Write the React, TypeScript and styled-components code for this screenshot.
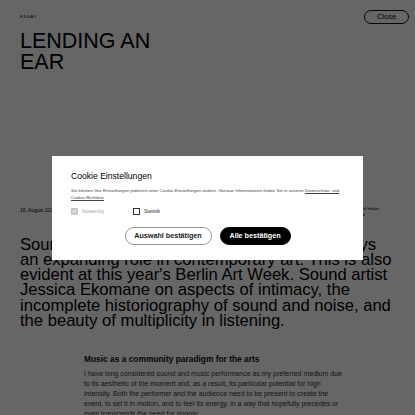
import React from "react";
import styled, { createGlobalStyle } from "styled-components";

const Global = createGlobalStyle`
  html, body { margin: 0; padding: 0; background: #fff; }
  body { font-family: "Liberation Sans", Arial, sans-serif; color: #000; overflow: hidden; }
  * { box-sizing: border-box; }
`;

const Page = styled.div`
  width: 415px;
  height: 415px;
  overflow: hidden;
  padding: 9px 6px 0 20px;
`;

const TopRow = styled.div`
  display: flex;
  justify-content: space-between;
  align-items: flex-start;
`;

const Kicker = styled.div`
  font-size: 4.4px;
  letter-spacing: 0.12em;
  margin-top: 5px;
`;

const CloseButton = styled.button`
  font-family: inherit;
  font-size: 7.5px;
  height: 14px;
  width: 45px;
  border: 1px solid #111;
  border-radius: 7px;
  background: transparent;
  color: #000;
  padding: 0;
  margin-top: 0.5px;
`;

const Headline = styled.h1`
  margin: 7px 0 0;
  font-size: 21.5px;
  line-height: 21px;
  font-weight: 400;
`;

const MetaRow = styled.div`
  display: grid;
  grid-template-columns: 1fr 52px;
  margin-top: 134px;
  font-size: 5px;
  line-height: 6px;
`;

const Credits = styled.div`
  font-size: 4.4px;
  line-height: 6px;
  margin-top: -1px;
  white-space: nowrap;
  margin-left: -10px;
`;

const Lead = styled.p`
  margin: 19px 0 0;
  font-size: 16.6px;
  line-height: 15.3px;
  white-space: nowrap;
`;

const Article = styled.div`
  margin: 26px 0 0 64px;
  width: 260px;
`;

const SubHead = styled.h2`
  margin: 0;
  font-size: 8.4px;
  font-weight: 700;
  line-height: 10px;
  color: #111;
`;

const Body = styled.p`
  margin: 5px 0 0;
  font-size: 7px;
  line-height: 10px;
  color: #333;
`;

const Overlay = styled.div`
  position: fixed;
  inset: 0;
  background: rgba(0, 0, 0, 0.6);
  display: flex;
  align-items: center;
  justify-content: center;
`;

const Modal = styled.div`
  width: 311px;
  height: 104px;
  background: #fff;
  padding: 15px 19px 0 19px;
  display: flex;
  flex-direction: column;
`;

const ModalTitle = styled.div`
  font-size: 8.6px;
  line-height: 11px;
  color: #000;
`;

const ModalText = styled.div`
  margin-top: 5px;
  font-size: 4.4px;
  line-height: 7px;
  color: #444;
  a { color: #444; text-decoration: underline; }
`;

const Options = styled.div`
  display: flex;
  align-items: center;
  margin-top: 7px;
`;

const Option = styled.label<{ $width: number; $muted?: boolean }>`
  display: flex;
  align-items: center;
  gap: 4px;
  width: ${(p) => p.$width}px;
  font-size: 4.6px;
  color: ${(p) => (p.$muted ? "#aaa" : "#333")};
`;

const Box = styled.span<{ $checked?: boolean }>`
  width: 7px;
  height: 7px;
  display: inline-flex;
  align-items: center;
  justify-content: center;
  border: 1px solid ${(p) => (p.$checked ? "#c8c8c8" : "#333")};
  background: ${(p) => (p.$checked ? "#c8c8c8" : "#fff")};
`;

const Buttons = styled.div`
  display: flex;
  justify-content: center;
  gap: 8px;
  margin-top: 12px;
`;

const PillButton = styled.button<{ $dark?: boolean }>`
  font-family: inherit;
  font-size: 7.2px;
  font-weight: 700;
  height: 18px;
  padding: 0;
  width: ${(p) => (p.$dark ? 71 : 87)}px;
  border-radius: 9px;
  border: 1px solid ${(p) => (p.$dark ? "#000" : "#999")};
  background: ${(p) => (p.$dark ? "#000" : "#fff")};
  color: ${(p) => (p.$dark ? "#fff" : "#222")};
`;

export default function App() {
  return (
    <>
      <Global />
      <Page>
        <TopRow>
          <Kicker>ESSAY</Kicker>
          <CloseButton>Close</CloseButton>
        </TopRow>
        <Headline>
          LENDING AN
          <br />
          EAR
        </Headline>
        <MetaRow>
          <div>16. August 2024</div>
          <Credits>
            Images of Halim
            <br />
            El-Sayed
          </Credits>
        </MetaRow>
        <Lead>
          Sound as a medium in its many forms now plays
          <br />
          an expanding role in contemporary art. This is also
          <br />
          evident at this year's Berlin Art Week. Sound artist
          <br />
          Jessica Ekomane on aspects of intimacy, the
          <br />
          incomplete historiography of sound and noise, and
          <br />
          the beauty of multiplicity in listening.
        </Lead>
        <Article>
          <SubHead>Music as a community paradigm for the arts</SubHead>
          <Body>
            I have long considered sound and music performance as my preferred medium due to its
            aesthetic of the moment and, as a result, its particular potential for high intensity.
            Both the performer and the audience need to be present to create the event, to set it
            in motion, and to feel its energy, in a way that hopefully precedes or even transcends
            the need for ‹logos›.
          </Body>
        </Article>
      </Page>
      <Overlay>
        <Modal>
          <ModalTitle>Cookie Einstellungen</ModalTitle>
          <ModalText>
            Sie können Ihre Einstellungen jederzeit unter Cookie-Einstellungen ändern. Genaue
            Informationen finden Sie in unserer <a>Datenschutz- und Cookie-Richtlinie</a>.
          </ModalText>
          <Options>
            <Option $width={62} $muted>
              <Box $checked>
                <svg width="6" height="6" viewBox="0 0 10 10">
                  <path d="M1.5 5.2 L4 7.6 L8.6 2.4" stroke="#fff" strokeWidth="1.6" fill="none" />
                </svg>
              </Box>
              Notwendig
            </Option>
            <Option $width={60}>
              <Box />
              Statistik
            </Option>
          </Options>
          <Buttons>
            <PillButton>Auswahl bestätigen</PillButton>
            <PillButton $dark>Alle bestätigen</PillButton>
          </Buttons>
        </Modal>
      </Overlay>
    </>
  );
}
